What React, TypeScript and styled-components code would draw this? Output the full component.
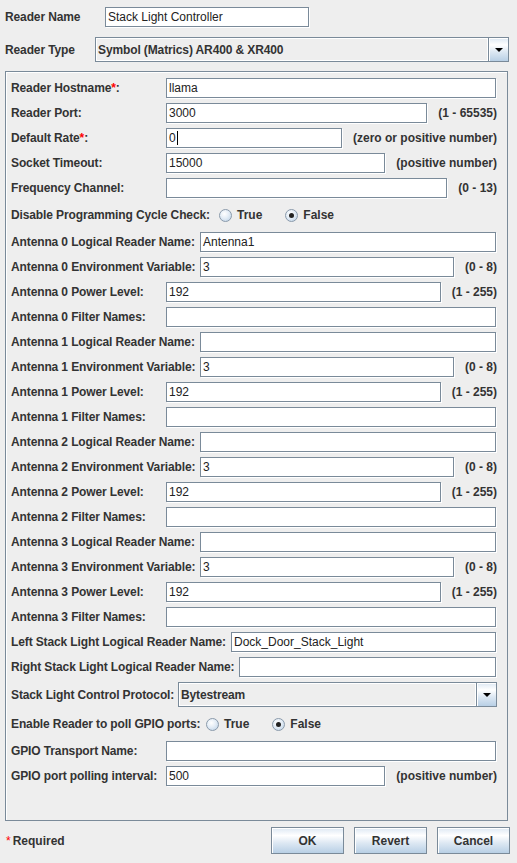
import styled, { createGlobalStyle } from 'styled-components';

const GlobalStyle = createGlobalStyle`
  html, body {
    margin: 0;
    padding: 0;
    background: #eeeeee;
  }
  body {
    font-family: "Liberation Sans", Arial, sans-serif;
    font-size: 12px;
    color: #333333;
  }
`;

const oceanGradient = 'linear-gradient(to bottom, #dde8f3 0%, #ffffff 30%, #dde8f3 60%, #b8cfe5 100%)';

const Page = styled.div`
  height: 100vh;
  box-sizing: border-box;
  display: flex;
  flex-direction: column;
  padding: 7px 8px 9px 5px;
`;

const TopRow = styled.div<{ $h: number; $mt?: number }>`
  display: flex;
  align-items: center;
  height: ${p => p.$h}px;
  margin-top: ${p => p.$mt ?? 0}px;
`;

const Label = styled.span<{ $w?: number }>`
  flex-shrink: 0;
  width: ${p => (p.$w ? `${p.$w}px` : 'auto')};
  font-weight: bold;
  letter-spacing: -0.12px;
  white-space: nowrap;
  color: #333333;
`;

const Star = styled.span`
  color: #ff0000;
`;

const Field = styled.div<{ $w?: number }>`
  box-sizing: border-box;
  height: 20px;
  ${p => (p.$w ? `width: ${p.$w}px;` : 'flex: 1; min-width: 0;')}
  margin-right: 1px;
  background: #ffffff;
  border: 1px solid #7a8a99;
  box-shadow: 1px 1px 0 #ffffff;
  padding: 0 2px;
  display: flex;
  align-items: center;
  color: #222222;
  white-space: nowrap;
  overflow: hidden;
`;

const Caret = styled.span`
  display: inline-block;
  width: 1px;
  height: 14px;
  background: #000000;
  margin-left: 1px;
`;

const Hint = styled.span`
  flex-shrink: 0;
  margin-left: 10px;
  font-weight: bold;
  color: #333333;
  white-space: nowrap;
`;

const Combo = styled.div`
  flex: 1;
  align-self: stretch;
  display: flex;
  box-sizing: border-box;
  border: 1px solid #7a8a99;
  background: #eeeeee;
`;

const ComboValue = styled.div`
  flex: 1;
  display: flex;
  align-items: center;
  padding-left: 2px;
  font-weight: bold;
  letter-spacing: -0.12px;
  color: #333333;
  box-shadow: inset 1px 1px 0 #ffffff, inset -1px -1px 0 #ffffff;
  white-space: nowrap;
  overflow: hidden;
`;

const ComboArrow = styled.div`
  width: 19px;
  flex-shrink: 0;
  display: flex;
  align-items: center;
  justify-content: center;
  border-left: 1px solid #7a8a99;
  background: ${oceanGradient};
  box-shadow: inset 1px 1px 0 #ffffff;

  &::after {
    content: '';
    width: 0;
    height: 0;
    border-left: 4px solid transparent;
    border-right: 4px solid transparent;
    border-top: 4px solid #000000;
  }
`;

const Panel = styled.div`
  flex: 1;
  width: 503px;
  box-sizing: border-box;
  margin-top: 9px;
  border: 1px solid #7a8a99;
  box-shadow: inset 1px 1px 0 #ffffff;
  padding: 6px 10px 0 5px;
  display: flex;
  flex-direction: column;
  gap: 5px;
`;

const Row = styled.div<{ $h?: number }>`
  display: flex;
  align-items: center;
  height: ${p => p.$h ?? 20}px;
`;

const RadioItem = styled.span`
  display: inline-flex;
  align-items: center;
  gap: 5px;
  margin-right: 23px;
  font-weight: bold;
  color: #333333;
`;

const RadioCircle = styled.span<{ $on: boolean }>`
  box-sizing: border-box;
  width: 13px;
  height: 13px;
  border-radius: 50%;
  border: 1px solid #8a9aab;
  background: radial-gradient(circle at 40% 35%, #ffffff 0%, #e4edf6 45%, #b8cfe5 100%);
  display: flex;
  align-items: center;
  justify-content: center;

  &::after {
    content: '';
    display: ${p => (p.$on ? 'block' : 'none')};
    width: 5px;
    height: 5px;
    border-radius: 50%;
    background: #222222;
  }
`;

const Footer = styled.div`
  display: flex;
  align-items: center;
  height: 27px;
  margin-top: 6px;
  padding-left: 1px;
`;

const Required = styled.span`
  flex: 1;
  font-weight: bold;
  color: #333333;

  span {
    color: #ff0000;
    font-weight: normal;
    margin-right: 2px;
  }
`;

const Buttons = styled.div`
  display: flex;
  gap: 10px;
  margin-right: -1px;
`;

const Button = styled.button`
  width: 73px;
  height: 27px;
  box-sizing: border-box;
  border: 1px solid #7a8a99;
  background: ${oceanGradient};
  box-shadow: inset 1px 1px 0 #ffffff;
  font-family: "Liberation Sans", Arial, sans-serif;
  font-size: 12px;
  font-weight: bold;
  color: #333333;
  padding: 0;
  cursor: pointer;
`;

type FieldRow = {
  label: string;
  w?: number;
  value?: string;
  hint?: string;
  required?: boolean;
  caret?: boolean;
};

const FieldLine = ({ label, w = 155, value = '', hint, required, caret }: FieldRow) => (
  <Row>
    <Label $w={w}>
      {label}
      {required && <Star>*</Star>}:
    </Label>
    <Field>
      {value}
      {caret && <Caret />}
    </Field>
    {hint && <Hint>{hint}</Hint>}
  </Row>
);

const RadioLine = ({ label, w, value }: { label: string; w: number; value: boolean }) => (
  <Row $h={24}>
    <Label $w={w}>{label}</Label>
    <RadioItem>
      <RadioCircle $on={value} />
      True
    </RadioItem>
    <RadioItem>
      <RadioCircle $on={!value} />
      False
    </RadioItem>
  </Row>
);

const antennaRows = (n: number, logical: string): FieldRow[] => [
  { label: `Antenna ${n} Logical Reader Name`, w: 189, value: logical },
  { label: `Antenna ${n} Environment Variable`, w: 189, value: '3', hint: '(0 - 8)' },
  { label: `Antenna ${n} Power Level`, value: '192', hint: '(1 - 255)' },
  { label: `Antenna ${n} Filter Names` },
];

const App = () => (
  <>
    <GlobalStyle />
    <Page>
      <TopRow $h={20}>
        <Label $w={100}>Reader Name</Label>
        <Field $w={204}>Stack Light Controller</Field>
      </TopRow>
      <TopRow $h={25} $mt={10}>
        <Label $w={90}>Reader Type</Label>
        <Combo>
          <ComboValue>Symbol (Matrics) AR400 &amp; XR400</ComboValue>
          <ComboArrow />
        </Combo>
      </TopRow>

      <Panel>
        <FieldLine label="Reader Hostname" required value="llama" />
        <FieldLine label="Reader Port" value="3000" hint="(1 - 65535)" />
        <FieldLine label="Default Rate" required value="0" caret hint="(zero or positive number)" />
        <FieldLine label="Socket Timeout" value="15000" hint="(positive number)" />
        <FieldLine label="Frequency Channel" hint="(0 - 13)" />
        <RadioLine label="Disable Programming Cycle Check:" w={208} value={false} />
        {[0, 1, 2, 3].flatMap(n =>
          antennaRows(n, n === 0 ? 'Antenna1' : '').map(r => <FieldLine key={r.label} {...r} />)
        )}
        <FieldLine label="Left Stack Light Logical Reader Name" w={220} value="Dock_Door_Stack_Light" />
        <FieldLine label="Right Stack Light Logical Reader Name" w={228} />
        <Row $h={25}>
          <Label $w={167}>Stack Light Control Protocol:</Label>
          <Combo>
            <ComboValue>Bytestream</ComboValue>
            <ComboArrow />
          </Combo>
        </Row>
        <RadioLine label="Enable Reader to poll GPIO ports:" w={195} value={false} />
        <FieldLine label="GPIO Transport Name" />
        <FieldLine label="GPIO port polling interval" value="500" hint="(positive number)" />
      </Panel>

      <Footer>
        <Required>
          <span>*</span>Required
        </Required>
        <Buttons>
          <Button>OK</Button>
          <Button>Revert</Button>
          <Button>Cancel</Button>
        </Buttons>
      </Footer>
    </Page>
  </>
);

export default App;
